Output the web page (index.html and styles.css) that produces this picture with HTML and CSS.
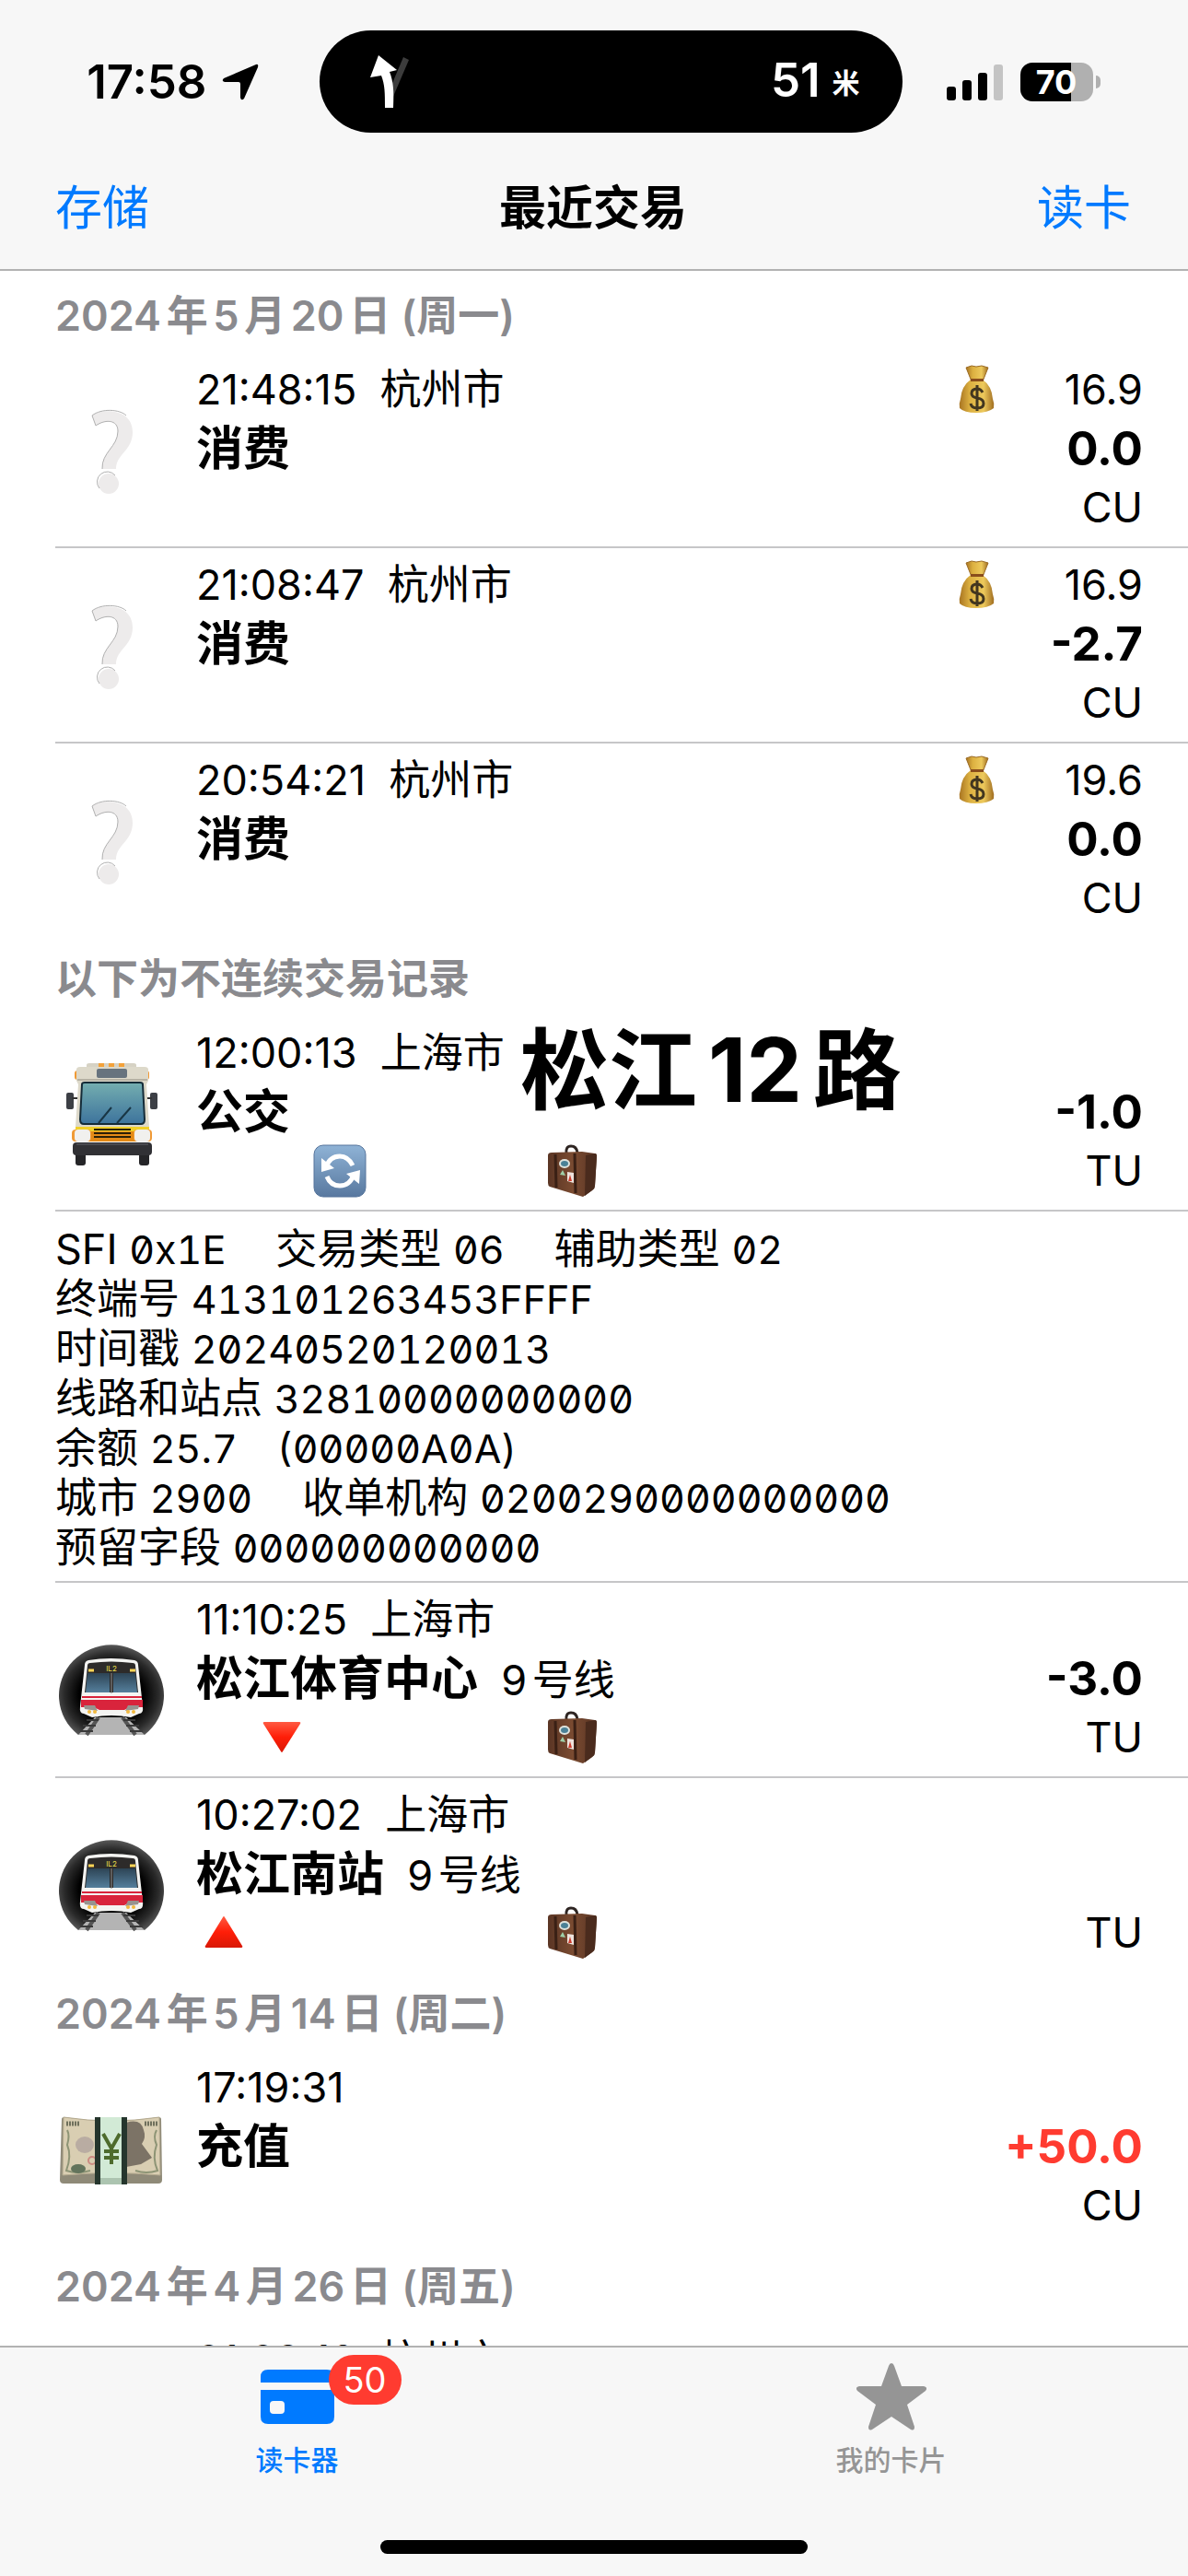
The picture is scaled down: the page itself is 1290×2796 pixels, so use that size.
FILE: index.html
```html
<!DOCTYPE html>
<html lang="zh-CN">

<head>
    <meta charset="UTF-8" />
    <meta name="viewport" content="width=device-width, initial-scale=1" />
    <title>最近交易</title>
    <link rel="stylesheet" href="styles.css">
</head>

<body>

    <!-- Shared icons -->
    <svg class="sprite" aria-hidden="true">
        <defs>
            <linearGradient id="gold" x1="0" x2="1" y1="0" y2="0">
                <stop offset="0" stop-color="#a87422" />
                <stop offset="0.3" stop-color="#dcb040" />
                <stop offset="0.7" stop-color="#edc95c" />
                <stop offset="1" stop-color="#a06d20" />
            </linearGradient>
            <linearGradient id="glass" x1="0" x2="0" y1="0" y2="1">
                <stop offset="0" stop-color="#74aeb0" />
                <stop offset="1" stop-color="#3d739c" />
            </linearGradient>
            <linearGradient id="window" x1="0" x2="0" y1="0" y2="1">
                <stop offset="0" stop-color="#2d4455" />
                <stop offset="1" stop-color="#557f9c" />
            </linearGradient>
            <linearGradient id="blue-key" x1="0" x2="0" y1="0" y2="1">
                <stop offset="0" stop-color="#8fb3d6" />
                <stop offset="1" stop-color="#58789f" />
            </linearGradient>
            <linearGradient id="red-tri" x1="0" x2="0" y1="0" y2="1">
                <stop offset="0" stop-color="#ff5a42" />
                <stop offset="0.5" stop-color="#ff1e08" />
                <stop offset="1" stop-color="#d81805" />
            </linearGradient>
            <radialGradient id="tunnel" cx="0.5" cy="0.55" r="0.56">
                <stop offset="0.55" stop-color="#000" />
                <stop offset="0.8" stop-color="#2a2a2a" />
                <stop offset="1" stop-color="#5c5c5c" />
            </radialGradient>
            <linearGradient id="leather" x1="0" x2="1" y1="0" y2="0">
                <stop offset="0" stop-color="#5a3524" />
                <stop offset="0.5" stop-color="#7a4b31" />
                <stop offset="1" stop-color="#5a3524" />
            </linearGradient>
        </defs>

        <symbol id="question" viewBox="0 0 120 120">
            <path d="M40 20C50 12 84 12 84 38 84 58 66 62 66 78H51C50 60 68 54 68 37 68 24 54 24 44 31z" fill="#edebeb" />
            <path d="M51 78C50 60 68 54 68 37 68 24 54 24 44 31L40 20C50 12 70 13 77 20" fill="none" stroke="#b0b0b0" stroke-width="1" />
            <ellipse cx="58" cy="94" rx="11" ry="11" fill="#edebeb" />
            <path d="M48 99a11 11 0 0 1 17-14" fill="none" stroke="#b0b0b0" stroke-width="1" />
        </symbol>

        <symbol id="bus" viewBox="0 0 120 120">
            <path d="M34 5q0-2 3-2h48q3 0 3 2v6H34z" fill="#d6d2c4" />
            <path d="M47 3h6v4h-6zM58 3h6v4h-6zM69 3h6v4h-6z" fill="#f3a23a" />
            <rect x="12" y="35" width="8" height="18" rx="2" fill="#3c3f45" />
            <rect x="103" y="35" width="8" height="18" rx="2" fill="#3c3f45" />
            <path d="M18 41h87" stroke="#333" stroke-width="2" />
            <rect x="21" y="11" width="81" height="10" rx="3" fill="#f09a35" />
            <path d="M23 10q0-3 4-3h70q4 0 4 3v12l-2 4 3 46H22l3-46-2-4z" fill="#ddd9ca" />
            <path d="M24 21h76" stroke="#b6b2a4" stroke-width="2" />
            <rect x="45" y="9" width="33" height="10" rx="2" fill="#67737e" />
            <path d="M29 26q0-2 3-2h60q3 0 3 2l2 38q0 5-4 5H31q-4 0-4-5z" fill="url(#glass)" stroke="#142b38" stroke-width="2" />
            <path d="m47 68 14-17M67 68l15-17" stroke="#193645" stroke-width="2" />
            <path d="M22 72h80v16H22z" fill="#e48a17" />
            <path d="M22 72h80v5H22z" fill="#f1d02a" />
            <path d="M42 75h40M42 79h40M42 83h40" stroke="#2c2107" stroke-width="2" />
            <rect x="18" y="75" width="21" height="13" rx="4" fill="#f09a35" />
            <rect x="85" y="75" width="20" height="13" rx="4" fill="#f09a35" />
            <rect x="21" y="75" width="17" height="13" rx="4" fill="#f1f0ee" />
            <rect x="86" y="75" width="17" height="13" rx="4" fill="#f1f0ee" />
            <rect x="22" y="96" width="11" height="18" rx="3" fill="#252528" />
            <rect x="91" y="96" width="11" height="18" rx="3" fill="#252528" />
            <rect x="19" y="89" width="86" height="14" rx="4" fill="#313135" />
            <path d="M23 91h78" stroke="#65656a" stroke-width="1" />
        </symbol>

        <symbol id="metro" viewBox="0 0 120 120">
            <path d="M25 117A57 55 0 1 1 97 117z" fill="url(#tunnel)" />
            <path d="M43 98h34l20 19H25z" fill="#b4b4b4" />
            <path d="m47 98-13 19M73 98l14 19" stroke="#555" stroke-width="4" />
            <path d="M34 101h13M30 107h14M27 113h14M74 101h13M77 107h14M81 113h14" stroke="#3a3a3a" stroke-width="2" />
            <path d="M32 41q0-4 4-5 24-4 50 0 4 1 4 5l5 45q1 8-4 8l-9 4q-21-4-42 0l-9-4q-5 0-4-8z" fill="#f4f4f2" />
            <path d="M35 42q0-3 3-3 23-3 46 0 3 0 3 3l3 29H32z" fill="#2d2b2a" />
            <path d="M35 50h24v21H33zM63 50h24l2 21H63z" fill="url(#window)" />
            <path d="M61 50v22" stroke="#8f8f8f" stroke-width="1" />
            <path d="M36 47h6M81 47h6" stroke="#ffd557" stroke-width="3" />
            <text x="61" y="48" text-anchor="middle" font-size="8" fill="#f0e04b">IL2</text>
            <path d="M29 75h65v2H29zM28 79h67v8H81l-6 3H48l-6-3H28z" fill="#d9243c" />
            <path d="M31 85h12l3 6-14-2zM91 85H79l-3 6 14-2z" fill="#98938f" />
            <circle cx="37" cy="92" r="2" fill="#f1b93f" />
            <circle cx="43" cy="92" r="2" fill="#f1b93f" />
            <circle cx="79" cy="92" r="2" fill="#f1b93f" />
            <circle cx="85" cy="92" r="2" fill="#f1b93f" />
        </symbol>

        <symbol id="yen" viewBox="0 0 120 120">
            <path d="M7 26q0-2 3-2 50 8 102 0 3 0 3 2l1 66q0 4-4 4H9q-4 0-4-4z" fill="#8f8a78" />
            <path d="M9 24q52 8 104 0l1 63q-52-5-106 0z" fill="#d9ceb2" stroke="#b3a98e" stroke-width="1" />
            <path d="M12 31h14M97 31h14" stroke="#6f705c" stroke-width="5" stroke-dasharray="2 1" />
            <path d="M13 38q3 6 0 16 5 12-1 28 12 4 26 0M110 38q-4 7 0 16-5 14 1 28-12 4-24 0" fill="none" stroke="#8d9475" stroke-width="2" />
            <ellipse cx="32" cy="54" rx="10" ry="9" fill="#b9aca2" />
            <circle cx="40" cy="71" r="4" fill="none" stroke="#cc8b83" stroke-width="2" />
            <ellipse cx="25" cy="80" rx="8" ry="5" fill="#63745c" />
            <path d="M77 30q16-5 19 8 3 8-2 15l11 15-12 7-16 3z" fill="#7c7366" />
            <path d="M43 24h35v73H43z" fill="#25362d" />
            <path d="M49 24h23v73H49z" fill="#d2ead6" />
            <path d="M49 90h23v7H49z" fill="#acc4b0" />
            <path d="m52 42 9 16 9-16M61 58v17M53 61h16M53 68h16" fill="none" stroke="#4e6b2d" stroke-width="4" />
        </symbol>

        <symbol id="bag" viewBox="0 0 60 60">
            <path d="m18 6 6-2 5 1 6-1 7 2-6 15H24z" fill="url(#gold)" stroke="#9a6a24" stroke-width="1" />
            <path d="M23 19q-10 7-11 21-2 5-1 10 5 5 18 5t19-5q1-5-1-10-1-14-11-21z" fill="url(#gold)" />
            <path d="M23 18h14v3H23z" fill="#8a4d1c" />
            <path d="M36 33q-2-4-6-4-6 0-6 5 0 4 6 5 7 1 7 6 0 5-7 5-6 0-7-5M30 25v28" fill="none" stroke="#42361f" stroke-width="3" />
        </symbol>

        <symbol id="refresh" viewBox="0 0 60 60">
            <rect x="2" y="2" width="56" height="56" rx="10" fill="url(#blue-key)" stroke="#56759c" stroke-width="1" />
            <path d="M15 26q4-12 15-12 9 0 14 10M45 34q-4 12-15 12-10 0-14-10" fill="none" stroke="#fff" stroke-width="5" />
            <path d="m10 16 0 15 14-4zM51 44l1-15-15 4z" fill="#fff" />
        </symbol>

        <symbol id="luggage" viewBox="0 0 60 60">
            <path d="M24 11q-1-8 5-8 6 0 7 7" fill="none" stroke="#2e2522" stroke-width="3" />
            <path d="M4 13q0-3 4-3l33-1 14 2q2 0 2 3l-2 32q0 3-3 5l-10 7-36-11q-2-1-2-4z" fill="url(#leather)" />
            <path d="M45 13l-1 44 8-6q3-2 3-5l2-32q0-3-2-3z" fill="#4a2b1d" />
            <path d="m12 12 1 36M33 11l1 43" stroke="#3a2015" stroke-width="3" />
            <ellipse cx="22" cy="22" rx="6" ry="5" fill="#dfe3dc" />
            <ellipse cx="22" cy="22" rx="4" ry="3" fill="#4b8196" />
            <path d="m20 29 3 6-6-1z" fill="#9fd0a8" />
            <path d="m25 31 7 1v11l-7-2z" fill="#eee3dd" />
            <path d="m28 34 2 7h-4z" fill="#cf3d2e" />
        </symbol>

        <symbol id="down" viewBox="0 0 60 60">
            <path d="M11 13h38q2 0 1 2L31 45q-1 2-2 0L10 15q-1-2 1-2z" fill="url(#red-tri)" />
        </symbol>

        <symbol id="up" viewBox="0 0 60 60">
            <path d="M11 46h38q2 0 1-2L31 13q-1-2-2 0L10 44q-1 2 1 2z" fill="url(#red-tri)" />
        </symbol>
    </svg>

    <div class="app">

        <!-- Status bar and navigation bar -->
        <header class="top-bar">
            <div class="status-bar">
                <div class="clock">
                    <span>17:58</span>
                    <svg class="location" viewBox="0 0 40 40">
                        <path d="M37 1q3-1 2 3L24 38q-3 3-4-1V22q0-2-2-2H3q-4-1-1-4z" />
                    </svg>
                </div>
                <div class="island">
                    <svg class="turn" viewBox="0 0 44 58">
                        <path d="m37 2 6 3-18 42-2-12z" fill="#3c3c3c" />
                        <path d="m10 0 20 16-8 2c4 10 5 20 4 39h-9c0-16 0-25-4-35L1 24z" fill="#fff" />
                    </svg>
                    <span class="distance">51 <small>米</small></span>
                </div>
                <div class="indicators">
                    <svg class="signal" viewBox="0 0 62 40">
                        <rect x="0" y="25" width="10" height="15" rx="3" />
                        <rect x="17" y="18" width="10" height="22" rx="3" />
                        <rect x="34" y="10" width="10" height="30" rx="3" />
                        <rect x="51" y="1" width="10" height="39" rx="3" fill="#c4c4c4" />
                    </svg>
                    <span class="battery">70</span>
                </div>
            </div>
            <nav class="nav-bar">
                <button class="nav-btn">存储</button>
                <h1>最近交易</h1>
                <button class="nav-btn">读卡</button>
            </nav>
        </header>

        <!-- Transactions -->
        <main class="list">
            <h2>2024年5月20日 (周一)</h2>
            <article class="row">
                <svg class="icon"><use href="#question" /></svg>
                <div class="info">
                    <p>21:48:15&nbsp; 杭州市</p>
                    <p><b>消费</b></p>
                </div>
                <div class="money">
                    <p><svg class="tag"><use href="#bag" /></svg><span class="balance">16.9</span></p>
                    <p class="amount">0.0</p>
                    <p>CU</p>
                </div>
            </article>
            <article class="row">
                <svg class="icon"><use href="#question" /></svg>
                <div class="info">
                    <p>21:08:47&nbsp; 杭州市</p>
                    <p><b>消费</b></p>
                </div>
                <div class="money">
                    <p><svg class="tag"><use href="#bag" /></svg><span class="balance">16.9</span></p>
                    <p class="amount">-2.7</p>
                    <p>CU</p>
                </div>
            </article>
            <article class="row last">
                <svg class="icon"><use href="#question" /></svg>
                <div class="info">
                    <p>20:54:21&nbsp; 杭州市</p>
                    <p><b>消费</b></p>
                </div>
                <div class="money">
                    <p><svg class="tag"><use href="#bag" /></svg><span class="balance">19.6</span></p>
                    <p class="amount">0.0</p>
                    <p>CU</p>
                </div>
            </article>

            <h2>以下为不连续交易记录</h2>
            <article class="row">
                <svg class="icon"><use href="#bus" /></svg>
                <div class="info">
                    <p>12:00:13&nbsp; 上海市</p>
                    <p><b>公交</b></p>
                    <div class="tags">
                        <svg class="tag transfer"><use href="#refresh" /></svg>
                        <svg class="tag away"><use href="#luggage" /></svg>
                    </div>
                    <strong class="line-name">松江12路</strong>
                </div>
                <div class="money">
                    <p></p>
                    <p class="amount">-1.0</p>
                    <p>TU</p>
                </div>
            </article>
            <div class="details">
                <p><span>SFI <code>0x1E</code></span><span>交易类型 <code>06</code></span><span>辅助类型 <code>02</code></span></p>
                <p><span>终端号 <code>413101263453FFFF</code></span></p>
                <p><span>时间戳 <code>20240520120013</code></span></p>
                <p><span>线路和站点 <code>32810000000000</code></span></p>
                <p><span>余额 <code>25.7&emsp;(00000A0A)</code></span></p>
                <p><span>城市 <code>2900</code></span><span>收单机构 <code>0200290000000000</code></span></p>
                <p><span>预留字段 <code>000000000000</code></span></p>
            </div>
            <article class="row">
                <svg class="icon"><use href="#metro" /></svg>
                <div class="info">
                    <p>11:10:25&nbsp; 上海市</p>
                    <p><b>松江体育中心</b>&nbsp; 9号线</p>
                    <div class="tags">
                        <svg class="tag exit"><use href="#down" /></svg>
                        <svg class="tag away"><use href="#luggage" /></svg>
                    </div>
                </div>
                <div class="money">
                    <p></p>
                    <p class="amount">-3.0</p>
                    <p>TU</p>
                </div>
            </article>
            <article class="row last">
                <svg class="icon"><use href="#metro" /></svg>
                <div class="info">
                    <p>10:27:02&nbsp; 上海市</p>
                    <p><b>松江南站</b>&nbsp; 9号线</p>
                    <div class="tags">
                        <svg class="tag enter"><use href="#up" /></svg>
                        <svg class="tag away"><use href="#luggage" /></svg>
                    </div>
                </div>
                <div class="money">
                    <p></p>
                    <p></p>
                    <p>TU</p>
                </div>
            </article>

            <h2>2024年5月14日 (周二)</h2>
            <article class="row last">
                <svg class="icon"><use href="#yen" /></svg>
                <div class="info">
                    <p>17:19:31</p>
                    <p><b>充值</b></p>
                </div>
                <div class="money">
                    <p></p>
                    <p class="amount plus">+50.0</p>
                    <p>CU</p>
                </div>
            </article>

            <h2>2024年4月26日 (周五)</h2>
            <article class="row last">
                <svg class="icon"><use href="#question" /></svg>
                <div class="info">
                    <p>21:29:10&nbsp; 杭州市</p>
                </div>
            </article>
        </main>

        <!-- Tab bar -->
        <footer class="tab-bar">
            <nav class="tabs">
                <a class="active" href="#">
                    <span class="tab-icon">
                        <svg viewBox="0 0 80 60">
                            <path d="M8 0h64q8 0 8 8v6H0V8q0-8 8-8zM0 22h80v29q0 8-8 8H8q-8 0-8-8zm14 12q-4 0-4 4v6q0 4 4 4h8q4 0 4-4v-6q0-4-4-4z" fill="currentColor" fill-rule="evenodd" />
                        </svg>
                        <span class="badge">50</span>
                    </span>
                    读卡器
                </a>
                <a href="#">
                    <span class="tab-icon">
                        <svg class="star" viewBox="0 0 76 74">
                            <path d="M38 0q2 0 3 3l8 22h24q5 1 2 5L55 45l8 24q0 5-4 3L38 58 17 72q-4 2-4-3l8-24L1 30q-3-4 2-5h24l8-22q1-3 3-3z" fill="currentColor" />
                        </svg>
                    </span>
                    我的卡片
                </a>
            </nav>
            <div class="home-indicator"></div>
        </footer>

    </div>

</body>

</html>
```
FILE: styles.css
```css
* {
    box-sizing: border-box;
}

body {
    font-family: Inter, 'Noto Sans CJK SC', sans-serif;
    font-size: 45px;
    line-height: 64px;
    background-color: #fff;
    color: #000;
    margin: 0;
    text-autospace: normal;
}

h1, h2, p {
    margin: 0;
}

.sprite {
    position: absolute;
    width: 0;
    height: 0;
}

.app {
    display: flex;
    flex-direction: column;
    height: 100vh;
}

/* Top */
.top-bar {
    background-color: #f7f7f7;
    border-bottom: 2px solid #b2b2b2;
    padding-top: 33px;
}

.status-bar {
    display: grid;
    grid-template-columns: 1fr auto 1fr;
    align-items: center;
    gap: 48px;
    padding-left: 36px;
}

.clock {
    display: flex;
    justify-content: flex-end;
    align-items: center;
    gap: 16px;
    padding-right: 18px;
    font-size: 51px;
    font-weight: 600;
}

.location {
    width: 40px;
    height: 40px;
}

.island {
    display: flex;
    justify-content: space-between;
    align-items: center;
    width: 633px;
    height: 111px;
    padding: 0 46px 0 54px;
    border-radius: 56px;
    background-color: #000;
    color: #fff;
}

.turn {
    width: 44px;
    height: 58px;
}

.distance {
    font-size: 51px;
    font-weight: 600;
}

.distance small {
    font-size: 30px;
    vertical-align: 4px;
}

.indicators {
    display: flex;
    align-items: center;
    gap: 18px;
}

.signal {
    width: 62px;
    height: 40px;
}

.battery {
    position: relative;
    width: 79px;
    height: 42px;
    border-radius: 13px;
    background: linear-gradient(to right, #000 70%, #b0b0b0 70%);
    color: #fff;
    font-size: 36px;
    font-weight: 700;
    line-height: 42px;
    text-align: center;
}

.battery::after {
    content: "";
    position: absolute;
    right: -8px;
    top: 14px;
    width: 5px;
    height: 14px;
    border-radius: 0 5px 5px 0;
    background-color: #b0b0b0;
}

.nav-bar {
    display: flex;
    justify-content: space-between;
    align-items: center;
    height: 148px;
    padding: 16px 62px 0 60px;
}

.nav-bar h1 {
    font-size: 51px;
    font-weight: 600;
}

.nav-btn {
    border: none;
    padding: 0;
    background: none;
    color: #007aff;
    font: inherit;
    font-size: 51px;
    cursor: pointer;
}

/* List */
.list {
    flex: 1;
    min-height: 0;
    overflow: hidden;
    padding: 5px 0 0 60px;
}

.list h2 {
    padding: 12px 0 8px;
    color: #8a8a8e;
    font-size: 45px;
    font-weight: 600;
}

.row {
    display: flex;
    height: 212px;
    padding: 8px 49px 0 0;
    border-bottom: 2px solid #c6c6c8;
}

.row.last {
    border-bottom-color: transparent;
}

.icon {
    width: 120px;
    height: 120px;
    margin: 40px 33px 0 0;
}

.info {
    position: relative;
    flex: 1;
}

.info p,
.money p {
    height: 64px;
    white-space: nowrap;
}

.info b {
    font-size: 51px;
}

/* Every kind of tag keeps its own slot */
.tags {
    display: grid;
    grid-template-columns: repeat(7, 63px);
    align-items: center;
    height: 64px;
}

.tag {
    width: 60px;
    height: 60px;
}

.enter {
    grid-column: 1;
}

.exit {
    grid-column: 2;
}

.transfer {
    grid-column: 3;
}

.away {
    grid-column: 7;
}

.line-name {
    position: absolute;
    left: 352px;
    top: 0;
    font-size: 96px;
    line-height: 100px;
    white-space: nowrap;
}

.money {
    width: 210px;
    text-align: right;
}

.money p:first-child {
    display: flex;
    justify-content: space-between;
    align-items: center;
}

.money .amount {
    font-size: 51px;
    font-weight: 700;
}

.money .plus {
    color: #ff3b30;
}

.details {
    padding: 14px 50px 9px 0;
    border-bottom: 2px solid #c6c6c8;
    line-height: 54px;
}

.details p {
    display: flex;
    gap: 54px;
}

.details code {
    font-family: inherit;
    font-size: 43px;
    font-feature-settings: "tnum", "zero";
}

/* Tabs */
.tab-bar {
    background-color: #f7f7f7;
    border-top: 2px solid #b2b2b2;
    padding-bottom: 24px;
}

.tabs {
    display: flex;
    height: 209px;
}

.tabs a {
    flex: 1;
    display: flex;
    flex-direction: column;
    align-items: center;
    padding-top: 14px;
    color: #959595;
    font-size: 30px;
    font-weight: 500;
    line-height: 40px;
    text-decoration: none;
}

.tabs a.active {
    color: #007aff;
}

.tab-icon {
    position: relative;
    display: flex;
    align-items: center;
    height: 80px;
    margin-bottom: 8px;
}

.tab-icon svg {
    width: 80px;
    height: 60px;
}

.tab-icon .star {
    width: 76px;
    height: 74px;
}

.badge {
    position: absolute;
    left: 74px;
    top: -6px;
    width: 79px;
    height: 54px;
    border-radius: 27px;
    background-color: #ff3b30;
    color: #fff;
    font-size: 38px;
    font-weight: 400;
    line-height: 54px;
    text-align: center;
}

.home-indicator {
    width: 36%;
    height: 15px;
    margin: 0 auto;
    border-radius: 8px;
    background-color: #000;
}
```
